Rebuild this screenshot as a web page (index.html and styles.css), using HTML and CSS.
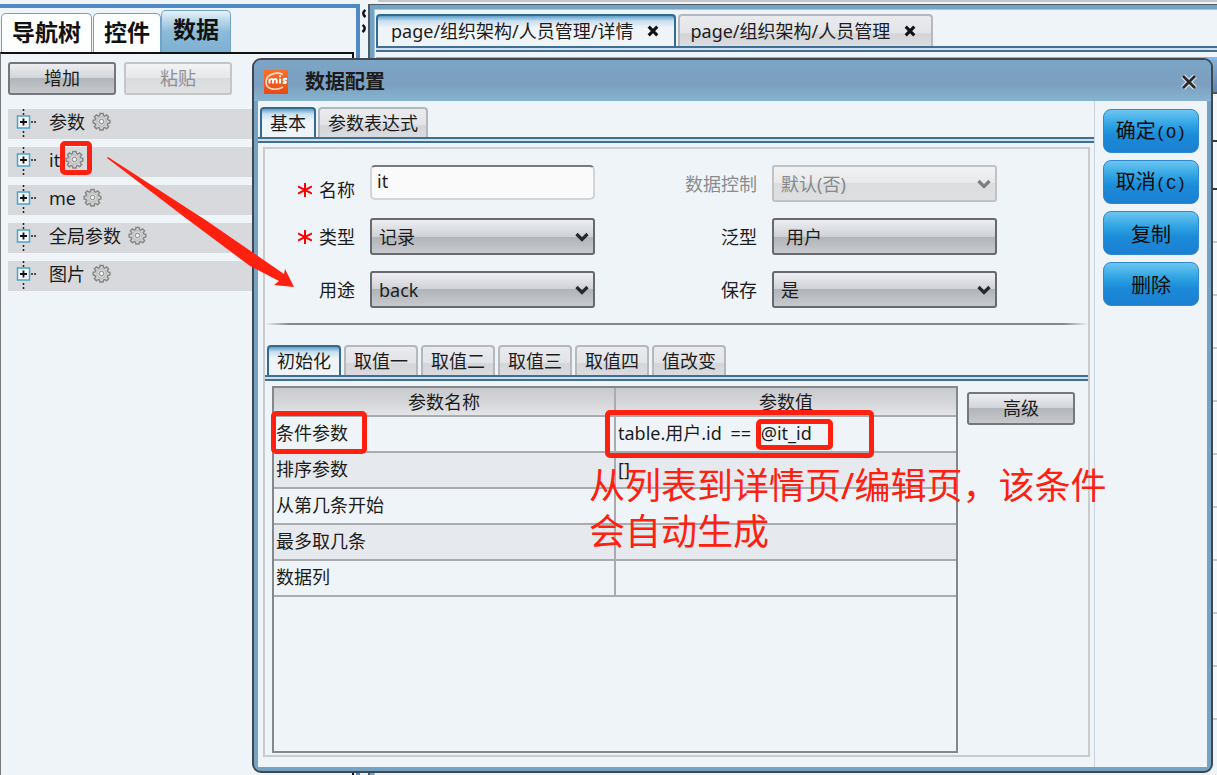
FILE: index.html
```html
<!DOCTYPE html>
<html lang="zh-CN">
<head>
<meta charset="utf-8">
<title>数据配置</title>
<link rel="stylesheet" href="styles.css">
</head>
<body>
<svg class="defs" aria-hidden="true">
  <defs>
    <symbol id="gear" viewBox="0 0 20 20">
      <path d="M8.3 1.5h3.4l.4 2.3 1.4.6 1.9-1.4 2.1 2.1-1.4 1.9.6 1.4 2.1.4v2.8l-2.1.6-.6 1.4 1.4 1.9-2.1 2.1-1.9-1.3-1.4.6-.4 2.1H8.3l-.4-2.1-1.4-.6-1.9 1.3-2.1-2.1 1.4-1.9-.6-1.4-2.1-.6V8.800l2.100-.4.6-1.400-1.400-1.900L4.600 3l1.900 1.400 1.400-.6z" fill="#d2d3d4" stroke="#868686" stroke-width="1.500"/>
      <circle cx="10" cy="10" r="5" fill="none" stroke="#b4b4b4"/>
      <circle cx="10" cy="10" r="2.300" fill="#f4f4f4" stroke="#808080"/>
    </symbol>
    <symbol id="plus" viewBox="0 0 22 30">
      <path d="M8.500 0v8M8.500 22v8" stroke="#222" stroke-width="1.500" stroke-dasharray="2 2"/>
      <path d="M16 13h7" stroke="#222" stroke-width="1.500" stroke-dasharray="2 1"/>
      <rect x="2.500" y="7" width="12" height="12" fill="#f4f8fa" stroke="#4ba3c7" stroke-width="1.500"/>
      <path d="M5 13h7M8.500 9.500v7" stroke="#111" stroke-width="1.800"/>
    </symbol>
    <symbol id="chevron" viewBox="0 0 14 10">
      <path d="M1.500 2 7 7.500 12.500 2" fill="none" stroke="currentColor" stroke-width="3.200"/>
    </symbol>
    <symbol id="star" viewBox="0 0 14 14">
      <path d="M7 0v14M0 3.500l14 7M0 10.500l14-7" stroke="#f00" stroke-width="2"/>
    </symbol>
    <symbol id="cross" viewBox="0 0 14 14">
      <path d="M2 2l10 10M12 2 2 12" stroke="currentColor" stroke-width="3.600"/>
    </symbol>
  </defs>
</svg>

<div class="app">
  <aside class="side">
    <nav class="side-tabs">
      <button class="side-tab">导航树</button>
      <button class="side-tab">控件</button>
      <button class="side-tab side-tab-on">数据</button>
    </nav>
    <div class="side-body">
      <div class="side-tools">
        <button class="btn">增加</button>
        <button class="btn" disabled>粘贴</button>
      </div>
      <ul class="tree">
        <li class="tree-row"><svg class="plus"><use href="#plus"/></svg><span>参数</span><svg class="gear"><use href="#gear"/></svg></li>
        <li class="tree-row tree-row-it"><svg class="plus"><use href="#plus"/></svg><span>it</span><svg class="gear"><use href="#gear"/></svg></li>
        <li class="tree-row"><svg class="plus"><use href="#plus"/></svg><span>me</span><svg class="gear"><use href="#gear"/></svg></li>
        <li class="tree-row"><svg class="plus"><use href="#plus"/></svg><span>全局参数</span><svg class="gear"><use href="#gear"/></svg></li>
        <li class="tree-row"><svg class="plus"><use href="#plus"/></svg><span>图片</span><svg class="gear"><use href="#gear"/></svg></li>
      </ul>
    </div>
  </aside>

  <div class="splitter">
    <svg class="grip" viewBox="0 0 8 26"><path d="M5.500 2Q1 5 5.500 9M2.500 17Q7 20 2.500 24" fill="none" stroke="#111" stroke-width="2.500"/></svg>
  </div>

  <main class="work">
    <div class="work-frame">
      <nav class="tabs work-tabs">
        <button class="tab tab-on">page/组织架构/人员管理/详情<svg class="tab-x"><use href="#cross"/></svg></button>
        <button class="tab">page/组织架构/人员管理<svg class="tab-x"><use href="#cross"/></svg></button>
      </nav>
      <div class="rail"></div>
      <div class="sheet">
        <div class="sheet-head"></div>
        <div class="sheet-row sheet-row-mark"></div>
        <div class="sheet-row sheet-row-mark"></div>
        <div class="sheet-row"></div><div class="sheet-row"></div><div class="sheet-row"></div>
        <div class="sheet-row"></div><div class="sheet-row"></div><div class="sheet-row"></div>
        <div class="sheet-row"></div><div class="sheet-row"></div><div class="sheet-row"></div>
        <div class="sheet-row"></div>
      </div>
    </div>
  </main>
</div>

<section class="dialog" role="dialog" aria-labelledby="dialog-title">
  <header class="dialog-head">
    <svg class="logo" viewBox="0 0 24 24">
      <defs><linearGradient id="lg" x2="0" y2="1"><stop offset="0" stop-color="#f9702c"/><stop offset="1" stop-color="#e94a12"/></linearGradient></defs>
      <rect width="24" height="24" fill="url(#lg)"/>
      <path d="M19 4.500C13 1.500 2 4 2 12c0 7 9 9.500 17 5" fill="none" stroke="#ffd9c8" stroke-width="1.600"/>
      <path d="M5.500 13.500V8.800m0 2c1-2.600 3.500-2.600 3.500 0v2.700m0-2.700c1-2.600 3.700-2.600 3.700 0v2.700M16 8.500v5M23 9c-4-1-4.500 1.500-2.200 2.200S22 13.500 18.800 13" fill="none" stroke="#fff" stroke-width="1.900"/>
      <circle cx="16" cy="6.300" r="1" fill="#fff"/>
    </svg>
    <h1 class="dialog-title" id="dialog-title">数据配置</h1>
    <button class="dialog-close" aria-label="关闭"><svg viewBox="0 0 16 16"><path d="M2 2l12 12M14 2 2 14" stroke="#dfe8f0" stroke-width="5"/><path d="M2 2l12 12M14 2 2 14" stroke="#2a2a2a" stroke-width="2.800"/></svg></button>
  </header>
  <div class="dialog-body">
    <div class="pane">
      <nav class="tabs pane-tabs">
        <button class="tab tab-on">基本</button>
        <button class="tab">参数表达式</button>
      </nav>
      <div class="rail"></div>
      <div class="pane-body">
        <div class="box">
          <form class="form">
            <label class="label label-low" for="f-name"><svg class="star"><use href="#star"/></svg>名称</label>
            <input class="input" id="f-name" type="text" value="it">
            <label class="label label-off" for="f-ctl">数据控制</label>
            <div class="pick"><select class="select" id="f-ctl" disabled><option>默认(否)</option></select><svg class="chev"><use href="#chevron"/></svg></div>

            <label class="label" for="f-type"><svg class="star"><use href="#star"/></svg>类型</label>
            <div class="pick"><select class="select" id="f-type"><option>记录</option></select><svg class="chev"><use href="#chevron"/></svg></div>
            <label class="label" for="f-gen">泛型</label>
            <button class="select select-btn" id="f-gen" type="button">用户</button>

            <label class="label" for="f-use">用途</label>
            <div class="pick"><select class="select" id="f-use"><option>back</option></select><svg class="chev"><use href="#chevron"/></svg></div>
            <label class="label" for="f-save">保存</label>
            <div class="pick"><select class="select" id="f-save"><option>是</option></select><svg class="chev"><use href="#chevron"/></svg></div>
          </form>
          <hr class="rule">
          <nav class="tabs inner-tabs">
            <button class="tab tab-on">初始化</button>
            <button class="tab">取值一</button>
            <button class="tab">取值二</button>
            <button class="tab">取值三</button>
            <button class="tab">取值四</button>
            <button class="tab">值改变</button>
          </nav>
          <div class="rail"></div>
          <div class="inner">
            <div class="grid">
              <table class="table">
                <thead><tr><th>参数名称</th><th>参数值</th></tr></thead>
                <tbody>
                  <tr><td>条件参数</td><td>table.用户.id <span class="op">==</span> @it_id</td></tr>
                  <tr><td>排序参数</td><td>[]</td></tr>
                  <tr><td>从第几条开始</td><td></td></tr>
                  <tr><td>最多取几条</td><td></td></tr>
                  <tr><td>数据列</td><td></td></tr>
                </tbody>
              </table>
            </div>
            <button class="btn btn-more">高级</button>
          </div>
        </div>
      </div>
    </div>
    <div class="actions">
      <button class="action">确定<span class="key">(O)</span></button>
      <button class="action">取消<span class="key">(C)</span></button>
      <button class="action">复制</button>
      <button class="action">删除</button>
    </div>
  </div>
</section>

<div class="mark mark-gear"></div>
<div class="mark mark-name"></div>
<div class="mark mark-value"></div>
<div class="mark mark-id"></div>
<svg class="arrow" viewBox="0 0 190 134"><path d="M1 0 100 64 177 117 178 112 187 130 167 128 172 124 143 109 80 62 0 1z" fill="#ff2010"/></svg>
<p class="note">从列表到详情页/编辑页，该条件<br>会自动生成</p>
</body>
</html>
```
FILE: styles.css
```css
* { box-sizing: border-box; }

body {
  margin: 0;
  height: 100vh;
  overflow: hidden;
  position: relative;
  background: #eff4f9;
  color: #1c1c1c;
  font: 18px/24px "Noto Sans", "Noto Sans CJK SC", sans-serif;
}

button, input, select { font: inherit; color: inherit; margin: 0; }
button { padding: 0; border: 0; background: none; }
svg { display: block; flex: none; }
.defs { position: absolute; width: 0; height: 0; }

.app { display: flex; height: 100%; }

/* left panel */
.side {
  width: 360px;
  margin-top: 4px;
  border-top: 4px solid #4f8ac6;
  border-right: 4px solid #4f8ac6;
  display: flex;
  flex-direction: column;
}
.side-tabs { display: flex; align-items: flex-end; height: 44px; padding-left: 1px; }
.side-tab {
  height: 39px;
  padding: 0 10px 3px;
  border: 1px solid #6fa3c8;
  border-bottom: 0;
  border-radius: 5px 5px 0 0;
  background: #fdfefe;
  color: #111;
  font-size: 23px;
  font-weight: 700;
  line-height: 34px;
  margin-right: 1px;
}
.side-tab-on {
  height: 42px;
  padding: 0 11px 6px;
  margin-left: -1px;
  background: linear-gradient(#e6f1f8, #8dbbd9 50%, #7db0d3);
}
.side-body {
  flex: 1;
  margin-right: 2px;
  border: 2px solid #111;
  border-left: 1px solid #777;
  border-bottom: 0;
  padding: 8px 0 0 7px;
}
.side-tools { display: flex; gap: 8px; }

.btn {
  width: 108px;
  height: 33px;
  padding-bottom: 2px;
  border: 2px solid #74777b;
  border-radius: 3px;
  background: linear-gradient(#eeeef1, #cfd3d7 50%, #b2b5b9 50%, #c6c8cc);
  line-height: 26px;
}
.btn:disabled { opacity: 1; border-color: #c3c5c8; background: linear-gradient(#f3f3f4, #e6e7e9 50%, #dadbdd 50%, #e0e1e2); color: #8e9194; }

.tree { list-style: none; margin: 14px 0 0; padding: 0; display: grid; gap: 8px; }
.tree-row {
  display: flex;
  align-items: center;
  height: 30px;
  padding-left: 7px;
  background: #d8d9dc;
  line-height: 28px;
}
.tree-row span { padding: 0 7px 4px 12px; }
.tree-row-it span { padding-right: 5px; }
.plus { width: 22px; height: 30px; }
.gear { width: 19px; height: 19px; margin-bottom: 6px; }

.splitter { width: 8px; padding-top: 8px; }
.grip { width: 8px; height: 26px; }

/* page area */
.work { flex: 1; min-width: 0; padding-top: 4px; background: linear-gradient(90deg, transparent 10px, #c4c6c8 10px) 0 0 / 100% 2px no-repeat; }
.work-frame {
  height: 100%;
  border: 2px solid #4e5a64;
  border-width: 1px 0 0 2px;
  background: #eff4f9;
  box-shadow: inset 4px 4px #75a3c3, inset 5px 5px #a9c6da;
  padding: 9px 0 0 6px;
}

.tabs { display: flex; align-items: flex-end; gap: 2px; }
.tab {
  display: flex;
  align-items: center;
  justify-content: center;
  height: 30px;
  padding: 0 8px;
  border: 2px solid #b5b8bc;
  border-bottom: 0;
  border-radius: 4px 4px 0 0;
  background: linear-gradient(#e9ebef, #e2e4e8 55%, #d3d5d9 60%, #dadce0);
  white-space: nowrap;
}
.tab-on {
  border-color: #336a92;
  background: linear-gradient(#5fa0cb, #c9dfee 5px, #eff4f9 12px);
}
.rail {
  height: 6px;
  border: 2px solid #3f6f94;
  border-width: 2px 0;
  background: #cfe0ee;
}
.work-tabs .tab { height: 32px; padding: 0 15px 0 13px; gap: 14px; }
.work-tabs .tab + .tab { padding-left: 10px; }
.tab-x { width: 12px; height: 12px; color: #111; }

.sheet { margin-top: 5px; border-top: 3px solid #7fb9ee; background: #f6f7f9; }
.sheet-head { height: 34px; background: linear-gradient(#86afd6, #5f86b4); border-bottom: 2px solid #555; }
.sheet-row { height: 53px; border-bottom: 2px solid #c6c8ca; }
.sheet-row-mark { height: 48px; border-color: #2b3a2b; }

/* dialog window */
.dialog {
  position: absolute;
  inset: 58px 4px 2px 252px;
  display: flex;
  flex-direction: column;
  border: 2px solid #40474e;
  border-radius: 9px;
  background: #76a2c3;
  padding: 0 4px 4px;
  overflow: hidden;
}
.dialog-head {
  display: flex;
  align-items: center;
  height: 41px;
  margin: 0 -4px;
  padding: 3px 14px 0 10px;
  background: linear-gradient(#7ba5c6, #7b9fc0 60%, #87b4d0);
}
.logo { width: 24px; height: 24px; }
.dialog-title { margin: 0 auto 0 17px; font-size: 20px; line-height: 28px; font-weight: 700; }
.dialog-close svg { width: 16px; height: 16px; }
.dialog-body { flex: 1; display: flex; min-height: 0; background: #eff4f9; }

.pane { flex: 1; min-width: 0; display: flex; flex-direction: column; padding-top: 6px; border-right: 1px solid #c8d3dd; }
.pane-tabs { padding-left: 2px; }
.pane-body { flex: 1; display: flex; padding: 4px 4px 10px 5px; min-height: 0; }
.box { flex: 1; min-width: 0; display: flex; flex-direction: column; border: 2px solid #c9cbce; }
.form {
  display: grid;
  grid-template-columns: 90px 225px 147px 225px;
  grid-auto-rows: 37px;
  column-gap: 15px;
  row-gap: 16px;
  padding: 16px 0 0;
}
.label { display: flex; justify-content: flex-end; align-items: center; gap: 7px; }
.label-low { align-items: flex-end; }
.label-low .star { margin-bottom: 5px; }
.label-off { color: #8a8d90; }
.star { width: 14px; height: 14px; }
.input {
  width: 100%;
  height: 35px;
  border: 2px solid #d3d4d6;
  border-top-color: #77797b;
  border-radius: 5px;
  background: #fafafa;
  padding: 0 5px 4px;
}
.pick { position: relative; }
.select {
  appearance: none;
  width: 100%;
  height: 37px;
  padding: 0 7px;
  border: 2px solid #66696d;
  border-radius: 3px;
  background: linear-gradient(#eeeef2, #cdd1d6 50%, #b0b4b9 50%, #c7c9cd);
}
.select:disabled { opacity: 1; border-color: #c0c2c5; background: linear-gradient(#f2f2f3, #e8e9eb 50%, #dcdddf 50%, #dedfe0); color: #86898c; }
.select-btn { text-align: left; padding-left: 12px; }
.chev { position: absolute; right: 6px; top: 14px; width: 14px; height: 10px; color: #26292c; pointer-events: none; }
.select:disabled + .chev { color: #7b7e82; }

.rule { align-self: stretch; margin: 15px 0 20px; border: 0; height: 2px; background: linear-gradient(90deg, transparent, #83878b 3%, #83878b 97%, transparent); }
.inner-tabs { gap: 3px; padding-left: 2px; }
.inner-tabs .tab { width: 74px; padding: 0; }

.inner { flex: 1; display: flex; align-items: flex-start; min-height: 0; padding: 5px 13px 2px 7px; gap: 9px; }
.grid { flex: 1; align-self: stretch; border: 2px solid #85888b; }
.table { width: 100%; border-collapse: collapse; table-layout: fixed; }
.table th { height: 28px; padding: 0; font-weight: 400; background: linear-gradient(#c9cacd, #d6d7da 60%, #e4e5e7); }
.table td { height: 36px; padding: 0 2px 2px; white-space: pre; }
.table th, .table td { border-bottom: 2px solid #a9abae; line-height: 24px; }
.table th + th, .table td + td { border-left: 2px solid #a9abae; }
.table tbody tr:nth-child(even) { background: #e6e9ed; }
.op { margin: 0 5px 0 4px; }
.btn-more { margin-top: 6px; }

.actions { display: grid; gap: 7px; align-content: start; padding: 8px 8px 0; }
.action {
  width: 96px;
  height: 44px;
  padding-top: 3px;
  border: 1px solid #2c88cf;
  border-radius: 8px;
  background: linear-gradient(#6cc6f0, #2fa4e3 35%, #1b8bd8 60%, #1c7fd2);
  color: #0a0a0a;
  font-size: 20px;
}
.key { font-family: "Liberation Mono", monospace; font-size: 17px; }

/* callouts drawn over the window */
.mark { position: absolute; border: 5px solid #ff2010; border-radius: 5px; }
.mark-gear { left: 60px; top: 141px; width: 32px; height: 34px; }
.mark-name { left: 271px; top: 411px; width: 96px; height: 43px; }
.mark-value { left: 605px; top: 410px; width: 269px; height: 48px; }
.mark-id { left: 756px; top: 419px; width: 77px; height: 31px; }
.arrow { position: absolute; left: 107px; top: 157px; width: 190px; height: 134px; }
.note {
  position: absolute;
  left: 589px;
  top: 463px;
  margin: 0;
  color: #ff2010;
  font-size: 36px;
  line-height: 46px;
  white-space: nowrap;
}
```
